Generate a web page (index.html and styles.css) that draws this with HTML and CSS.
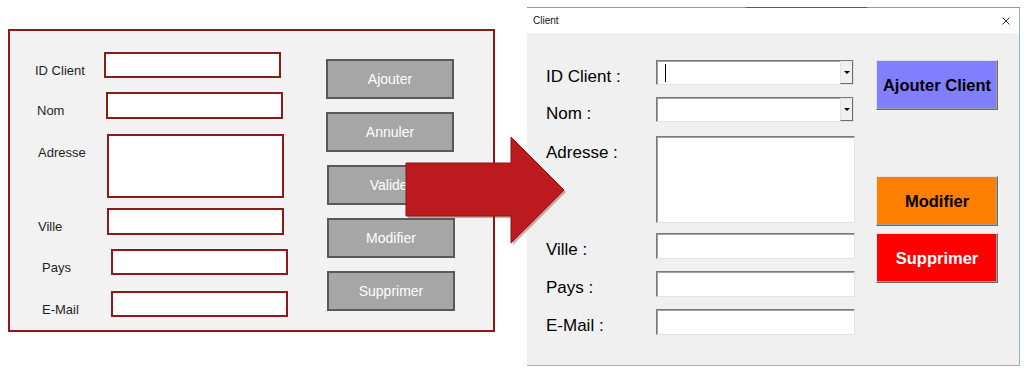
FILE: index.html
```html
<!DOCTYPE html>
<html lang="fr">
<head>
  <meta charset="UTF-8">
  <title>Client</title>
  <link rel="stylesheet" href="styles.css">
</head>
<body>
  <div class="stage">

    <!-- maquette dessinee -->
    <section class="sketch">
      <div class="fields">
        <div class="row r-id"><span class="lbl">ID Client</span><span class="box"></span></div>
        <div class="row r-nom"><span class="lbl">Nom</span><span class="box tall"></span></div>
        <div class="row r-adr"><span class="lbl">Adresse</span><span class="box area"></span></div>
        <div class="row r-ville"><span class="lbl">Ville</span><span class="box tall"></span></div>
        <div class="row r-pays"><span class="lbl">Pays</span><span class="box"></span></div>
        <div class="row r-mail"><span class="lbl">E-Mail</span><span class="box"></span></div>
      </div>
      <div class="actions">
        <button>Ajouter</button>
        <button>Annuler</button>
        <button class="nudge">Valider</button>
        <button class="nudge">Modifier</button>
        <button class="nudge">Supprimer</button>
      </div>
    </section>

    <!-- formulaire final -->
    <div class="window">
      <div class="titlebar">
        <span class="title">Client</span>
        <svg class="close" width="8" height="8" viewBox="0 0 8 8">
          <path d="M0.5 0.5 L7.5 7.5 M7.5 0.5 L0.5 7.5" stroke="#333" stroke-width="1" fill="none"/>
        </svg>
      </div>
      <div class="window-body">
        <div class="form">
          <div class="wrow">
            <label>ID Client :</label>
            <div class="tb combo"><span class="caret"></span><span class="drop"><i></i></span></div>
          </div>
          <div class="wrow">
            <label>Nom :</label>
            <div class="tb combo"><span></span><span class="drop"><i></i></span></div>
          </div>
          <div class="wrow gap-adr">
            <label>Adresse :</label>
            <div class="tb textarea"></div>
          </div>
          <div class="wrow gap-ville">
            <label>Ville :</label>
            <div class="tb text"></div>
          </div>
          <div class="wrow">
            <label>Pays :</label>
            <div class="tb text"></div>
          </div>
          <div class="wrow">
            <label>E-Mail :</label>
            <div class="tb text"></div>
          </div>
        </div>
        <div class="cmds">
          <button class="cmd add">Ajouter Client</button>
          <button class="cmd edit">Modifier</button>
          <button class="cmd del">Supprimer</button>
        </div>
      </div>
    </div>

    <svg class="arrow" width="1034" height="375" viewBox="0 0 1034 375">
      <polygon points="408,165 513,165 513,139 566,192 513,245 513,218 408,218" fill="#7a1010" opacity="0.35"/>
      <polygon points="406,163 511,163 511,137 564,190 511,243 511,216 406,216" fill="#bb1b1f" stroke="#8e1417" stroke-width="1"/>
    </svg>
  </div>
</body>
</html>
```

FILE: styles.css
```css
body {
  margin: 0;
  background: #fff;
  font-family: "Liberation Sans", Arial, sans-serif;
}
.stage {
  position: relative;
  width: 1034px;
  height: 375px;
  display: flex;
  align-items: flex-start;
}

/* maquette */
.sketch {
  box-sizing: border-box;
  width: 487px;
  height: 303px;
  margin: 29px 0 0 8px;
  padding: 21px 0 0 25px;
  border: 2px solid #8b1a1a;
  background: #f2f2f2;
  display: flex;
}
.fields {
  width: 260px;
  display: flex;
  flex-direction: column;
}
.row {
  display: flex;
  align-items: flex-start;
}
.lbl {
  width: 69px;
  padding-top: 11px;
  font-size: 13px;
  line-height: 15px;
  color: #1e1e1e;
}
.box {
  box-sizing: border-box;
  width: 177px;
  height: 26px;
  border: 2px solid #8b1a1a;
  background: #fff;
}
.box.tall { height: 27px; }
.box.area { height: 64px; }
.r-nom { margin: 14px 0 0 2px; }
.r-adr { margin: 15px 0 0 3px; }
.r-ville { margin: 10px 0 0 3px; }
.r-pays { margin: 14px 0 0 7px; }
.r-mail { margin: 16px 0 0 7px; }

.actions {
  display: flex;
  flex-direction: column;
  gap: 13px;
  margin: 7px 0 0 31px;
}
.actions button {
  box-sizing: border-box;
  width: 128px;
  height: 40px;
  border: 2px solid #595959;
  background: #a6a6a6;
  color: #fff;
  font-family: "Liberation Sans", Arial, sans-serif;
  font-size: 14px;
  padding: 0;
}
.actions .nudge { margin-left: 1px; }

/* fenetre */
.window {
  position: relative;
  box-sizing: border-box;
  width: 493px;
  height: 359px;
  margin: 7px 0 0 32px;
  border-top: 1px solid #6aa3dc;
  border-right: 1px solid #8db4de;
  border-bottom: 1px solid #8db4de;
  display: flex;
  flex-direction: column;
}
.window::before {
  content: "";
  position: absolute;
  top: -1px;
  left: 219px;
  width: 121px;
  height: 1px;
  background: #1d63b3;
}
.titlebar {
  height: 25px;
  background: #fff;
  display: flex;
  align-items: center;
  justify-content: space-between;
  padding: 0 9px 0 6px;
}
.title {
  font-size: 10px;
  color: #111;
}
.close { display: block; }

.window-body {
  flex: 1;
  background: #f0f0f0;
  display: flex;
  align-items: flex-start;
  padding: 27px 0 0 19px;
}
.form {
  display: flex;
  flex-direction: column;
}
.wrow {
  display: flex;
  align-items: flex-start;
}
.wrow + .wrow { margin-top: 12px; }
.wrow.gap-adr { margin-top: 14px; }
.wrow.gap-ville { margin-top: 10px; }
.wrow label {
  width: 110px;
  padding-top: 10px;
  font-size: 17px;
  line-height: 14px;
  color: #000;
}
.tb {
  box-sizing: border-box;
  width: 199px;
  background: #fff;
  border: 1px solid;
  border-color: #7a7a7a #e3e3e3 #e3e3e3 #7a7a7a;
  box-shadow: inset 1px 1px 0 #a0a0a0;
}
.tb.text { height: 26px; }
.tb.textarea { height: 87px; }
.tb.combo {
  height: 25px;
  width: 198px;
  display: flex;
  justify-content: space-between;
}
.caret {
  width: 1px;
  height: 18px;
  margin: 3px 0 0 8px;
  background: #000;
}
.drop {
  box-sizing: border-box;
  width: 13px;
  height: 23px;
  background: #f0f0f0;
  border: 1px solid;
  border-color: #e3e3e3 #696969 #696969 #e3e3e3;
  display: flex;
  align-items: center;
  justify-content: center;
}
.drop i {
  width: 0;
  height: 0;
  border-left: 3px solid transparent;
  border-right: 3px solid transparent;
  border-top: 3px solid #000;
}

.cmds {
  display: flex;
  flex-direction: column;
  margin-left: 21px;
}
.cmd {
  box-sizing: border-box;
  width: 122px;
  height: 50px;
  padding: 0;
  border: 1px solid;
  border-color: #e3e3e3 #696969 #696969 #e3e3e3;
  box-shadow: inset -1px -1px 0 #a0a0a0;
  font-family: "Liberation Sans", Arial, sans-serif;
  font-size: 16.5px;
  font-weight: bold;
  color: #000;
}
.cmd.add { background: #8080ff; }
.cmd.edit { background: #ff8000; margin-top: 66px; }
.cmd.del { background: #ff0000; color: #fff; margin-top: 7px; }

.arrow {
  position: absolute;
  left: 0;
  top: 0;
  pointer-events: none;
}
```
